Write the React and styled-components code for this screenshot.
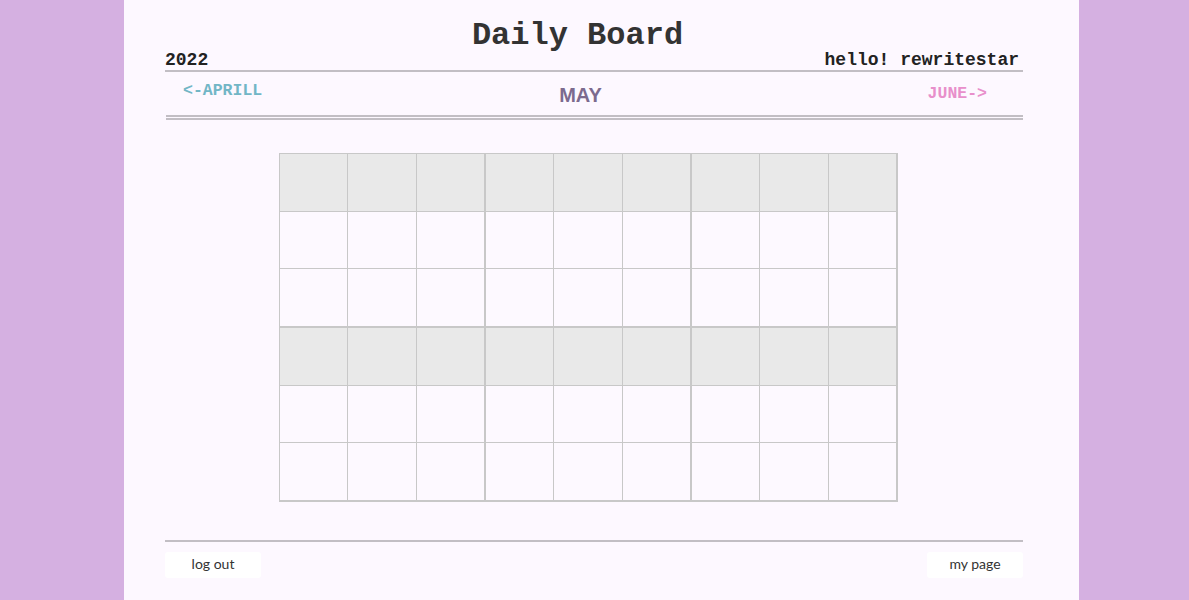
import React from "react"
import styled, { createGlobalStyle } from "styled-components"

const GlobalStyle = createGlobalStyle`
  html, body {
    margin: 0;
    padding: 0;
    background: #d5b0e1;
  }
`

const Page = styled.div`
  width: 955px;
  min-height: 100vh;
  margin-left: 124px;
  padding: 20px 56px 0 41px;
  box-sizing: border-box;
  background: #fdf8ff;
  font-family: "Liberation Mono", "Courier New", monospace;
  color: #2b2b2b;
`

const Title = styled.h1`
  margin: 0;
  padding-right: 33px;
  font-size: 32px;
  line-height: 31px;
  font-weight: bold;
  text-align: center;
  color: #333;
`

const TopRow = styled.div`
  display: flex;
  justify-content: space-between;
  font-size: 18px;
  line-height: 18px;
  font-weight: bold;
  padding: 0 4px 1px 0;
  border-bottom: 2px solid #c2bec4;
  color: #222;
`

const NavRow = styled.nav`
  display: grid;
  grid-template-columns: 1fr auto 1fr;
  align-items: start;
  height: 43px;
  padding: 0 36px 0 17px;
  border-bottom: 5px double #c2bec4;
  margin-left: 1px;
`

const MonthLink = styled.a`
  justify-self: ${props => props.align};
  margin-top: ${props => props.offset}px;
  font-size: 16.5px;
  line-height: 16px;
  font-weight: bold;
  color: ${props => props.colour};
  text-decoration: none;
  cursor: pointer;
`

const Month = styled.h2`
  margin: 13px 9px 0 0;
  font-family: "Liberation Sans", Arial, sans-serif;
  font-size: 20px;
  line-height: 20px;
  font-weight: bold;
  color: #7c6a8e;
`

const Board = styled.div`
  display: grid;
  grid-template-columns: repeat(3, 206px);
  width: max-content;
  margin: 33px 0 0 114px;
  border-right: 1px solid #c8c8c8;
  border-bottom: 1px solid #c8c8c8;
`

const Block = styled.div`
  display: grid;
  grid-template-columns: repeat(3, 1fr);
  grid-template-rows: 57px 56px 57px;
  gap: 1px;
  border: 1px solid #c8c8c8;
  background: #c8c8c8;
`

const Cell = styled.div`
  background: ${props => (props.head ? "#e9e9e9" : "#fdf9ff")};
`

const Footer = styled.footer`
  display: flex;
  justify-content: space-between;
  margin-top: 38px;
  padding-top: 10px;
  border-top: 2px solid #c2bec4;
`

const Button = styled.button`
  width: 96px;
  height: 26px;
  padding: 0 0 3px;
  border: none;
  border-radius: 3px;
  background: #ffffff;
  font-family: Lato, "Open Sans", sans-serif;
  font-size: 14px;
  color: #333;
  cursor: pointer;
`

const blocks = Array.from({ length: 6 })

const App = () => (
  <>
    <GlobalStyle />
    <Page>
      <Title>Daily Board</Title>
      <TopRow>
        <span>2022</span>
        <span>hello! rewritestar</span>
      </TopRow>
      <NavRow>
        <MonthLink align="start" offset={11} colour="#72b6c6">
          &lt;-APRILL
        </MonthLink>
        <Month>MAY</Month>
        <MonthLink align="end" offset={14} colour="#e88fcb">
          JUNE-&gt;
        </MonthLink>
      </NavRow>
      <Board>
        {blocks.map((_, b) => (
          <Block key={b}>
            {Array.from({ length: 9 }).map((_, i) => (
              <Cell key={i} head={i < 3} />
            ))}
          </Block>
        ))}
      </Board>
      <Footer>
        <Button>log out</Button>
        <Button>my page</Button>
      </Footer>
    </Page>
  </>
)

export default App
